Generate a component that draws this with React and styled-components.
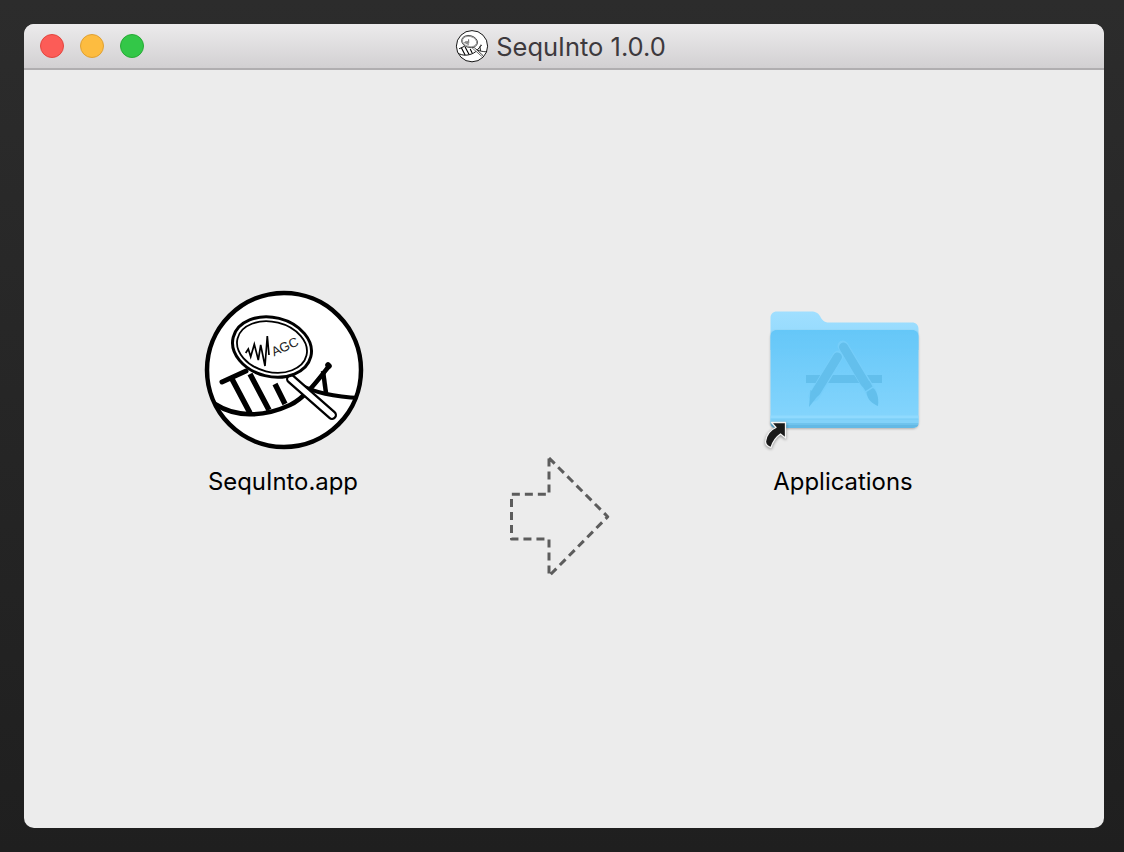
import React from 'react';
import styled, { createGlobalStyle } from 'styled-components';

const GlobalStyle = createGlobalStyle`
  html, body {
    margin: 0;
    height: 100%;
  }
  body {
    font-family: Inter, "Liberation Sans", sans-serif;
    overflow: hidden;
  }
`;

const Desktop = styled.div`
  box-sizing: border-box;
  width: 1124px;
  height: 852px;
  padding: 24px 20px 24px 24px;
  background: linear-gradient(#2c2c2c, #1f1f1f);
`;

const Window = styled.div`
  width: 1080px;
  height: 804px;
  display: flex;
  flex-direction: column;
  border-radius: 10px;
  overflow: hidden;
  background: #ececec;
`;

const TitleBar = styled.header`
  flex: none;
  box-sizing: border-box;
  height: 46px;
  display: grid;
  grid-template-columns: 1fr auto 1fr;
  align-items: center;
  padding: 0 16px;
  background: linear-gradient(#ecebec, #d2d0d2);
  border-bottom: 2px solid #b0aeb0;
`;

const Lights = styled.div`
  display: flex;
  gap: 16px;
`;

const Light = styled.span`
  box-sizing: border-box;
  width: 24px;
  height: 24px;
  border-radius: 50%;
  background: ${p => p.$fill};
  border: 1px solid ${p => p.$edge};
`;

const Title = styled.div`
  display: flex;
  align-items: center;
  gap: 8px;
  margin-left: -6px;
  color: #3d393d;
  font-size: 25.5px;
  line-height: 30px;
`;

const TitleText = styled.span`
  padding-top: 2px;
`;

const Content = styled.main`
  flex: 1;
  display: flex;
  align-items: flex-start;
  padding: 220px 0 0 159px;
`;

const Item = styled.div`
  flex: none;
  width: 200px;
  display: flex;
  flex-direction: column;
  align-items: center;
`;

const ItemLabel = styled.div`
  margin-top: 16px;
  color: #000;
  font-size: 23.9px;
  line-height: 31px;
`;

const DropArrow = styled.svg`
  flex: none;
  display: block;
  margin: 167px 132px 0 126px;
`;

const Icon = styled.svg`
  display: block;
  overflow: visible;
`;

const Logo = ({ size, box, showText = true }) => (
  <Icon width={size} height={size} viewBox={box}>
    <defs>
      <clipPath id={`disc${size}`}>
        <circle cx="284" cy="370" r="76" />
      </clipPath>
    </defs>
    <circle cx="284" cy="370" r="77" fill="#fff" stroke="#000" strokeWidth="4.5" />
    <g clipPath={`url(#disc${size})`} fill="none" stroke="#000">
      <path d="M215 404C235 417 262 418 290 405C305 398 318 380 329 366" strokeWidth="4.6" />
      <path d="M222 382L246 371" strokeWidth="5" strokeLinecap="round" />
      <path d="M298 384C315 393 335 397 360 398" strokeWidth="4" />
      <path d="M329 366L328 365" strokeWidth="5.500" strokeLinecap="round" />
      <path d="M232 379L250 413M250 374L269 410M275 384L285 404" strokeWidth="5.500" />
      <path d="M323 371L326 393" strokeWidth="4.500" />
    </g>
    <path d="M291 379L332 415" stroke="#000" strokeWidth="10" strokeLinecap="round" />
    <path d="M291 379L332 415" stroke="#fff" strokeWidth="5.500" strokeLinecap="round" />
    <ellipse cx="272" cy="347" rx="40" ry="29.500" transform="rotate(14 272 347)" fill="#fff" stroke="#000" strokeWidth="3" />
    <ellipse cx="272" cy="347" rx="35.500" ry="25" transform="rotate(14 272 347)" fill="#fff" stroke="#000" strokeWidth="1.800" />
    <path
      d="M245.7 353L248.3 349L250.7 356.7L254.3 344.3L258.3 360L260.7 345L265 366L267.3 336L269 355"
      fill="none"
      stroke="#000"
      strokeWidth="1.700"
    />
    {showText && (
      <text
        x="285"
        y="351"
        textAnchor="middle"
        transform="rotate(-25 285 347)"
        fontFamily="Liberation Sans, sans-serif"
        fontSize="13"
        fill="#222"
      >
        AGC
      </text>
    )}
  </Icon>
);

const Folder = () => (
  <Icon width="160" height="160" viewBox="763 290 160 160">
    <defs>
      <linearGradient id="folderBack" x1="0" y1="0" x2="0" y2="1">
        <stop offset="0" stopColor="#a0dfff" />
        <stop offset="1" stopColor="#8fd8fd" />
      </linearGradient>
      <linearGradient id="folderFront" x1="0" y1="0" x2="0" y2="1">
        <stop offset="0" stopColor="#65c7f8" />
        <stop offset="1" stopColor="#87d6fd" />
      </linearGradient>
      <filter id="folderShade" x="-10%" y="-10%" width="120%" height="120%">
        <feDropShadow dx="0" dy="1" stdDeviation="1.2" floodColor="#000" floodOpacity="0.25" />
      </filter>
    </defs>
    <path
      d="M770.500 318C770.500 314 773 311.500 777 311.500H811C816 311.500 818 313 820 316C822 320 824 322.500 829 322.500H912C916 322.500 918.500 325 918.500 329V350H770.500Z"
      fill="url(#folderBack)"
    />
    <g filter="url(#folderShade)">
      <path
        d="M770.500 337C770.500 332 773 330 777 330H912C916 330 918.500 332 918.500 337V421C918.500 425.500 916 428 912 428H777C773 428 770.500 425.500 770.500 421Z"
        fill="url(#folderFront)"
      />
    </g>
    <path d="M770.500 415.500H918.500V418.500H770.500Z" fill="#90dafe" />
    <path d="M770.500 418.500H918.500V420H770.500Z" fill="#7dcff7" />
    <path d="M770.500 420H918.500V423H770.500Z" fill="#83d2f9" />
    <path d="M770.500 423H918.500V424.500H770.500Z" fill="#70c4ee" />
    <path d="M770.500 424.500H918.500C918 426.500 916 428 912 428H777C773 428 771 426.500 770.500 424.500Z" fill="#64b9e5" />

    <path d="M806 375H882V383H806Z" fill="#63bfec" />
    <path d="M838 356L814 396" stroke="#76cefa" strokeWidth="11" strokeLinecap="round" />
    <path d="M843 346L871 392" stroke="#76cefa" strokeWidth="11" strokeLinecap="round" />
    <path d="M837.500 357L816 392" stroke="#63bfec" strokeWidth="9" strokeLinecap="round" />
    <path d="M810.500 390L818.500 395L809 407Z" fill="#63bfec" />
    <path d="M843.500 347L865 383" stroke="#63bfec" strokeWidth="9" strokeLinecap="round" />
    <path d="M862 385.500L869.500 381L872.500 386.500L865.500 391Z" fill="#63bfec" />
    <path d="M866.500 392L873 388C877 391 879 398 878 406C873 404 867 400 866.500 392Z" fill="#63bfec" />

    <path
      d="M771.500 422.500H785.500V438L780.500 434C776 437 773 441 771 447.500C767.500 446.500 765.500 444.500 765.500 441.500C766.500 435 770 430 776 427.500Z"
      fill="#1a1a1a"
      stroke="#f4f4f4"
      strokeWidth="1.300"
      strokeLinejoin="round"
      style={{ filter: 'drop-shadow(0 1px 1.5px rgba(0,0,0,.4))' }}
    />
  </Icon>
);

export default function App() {
  return (
    <>
      <GlobalStyle />
      <Desktop>
        <Window>
          <TitleBar>
            <Lights>
              <Light $fill="#fc5c57" $edge="#e2463f" />
              <Light $fill="#fdbc40" $edge="#dfa033" />
              <Light $fill="#33c748" $edge="#27aa35" />
            </Lights>
            <Title>
              <Logo size={32} box="205 290 158 158" showText={false} />
              <TitleText>SequInto 1.0.0</TitleText>
            </Title>
          </TitleBar>
          <Content>
            <Item>
              <Logo size={160} box="203 290 160 160" />
              <ItemLabel>SequInto.app</ItemLabel>
            </Item>
            <DropArrow width="102" height="122" viewBox="509 457 102 122">
              <path
                d="M549 458L607.700 516.700L549 576V539H511.500V494.300H549Z"
                fill="none"
                stroke="#5c5c5c"
                strokeWidth="3"
                strokeDasharray="8 5"
                strokeLinejoin="round"
              />
            </DropArrow>
            <Item>
              <Folder />
              <ItemLabel>Applications</ItemLabel>
            </Item>
          </Content>
        </Window>
      </Desktop>
    </>
  );
}
